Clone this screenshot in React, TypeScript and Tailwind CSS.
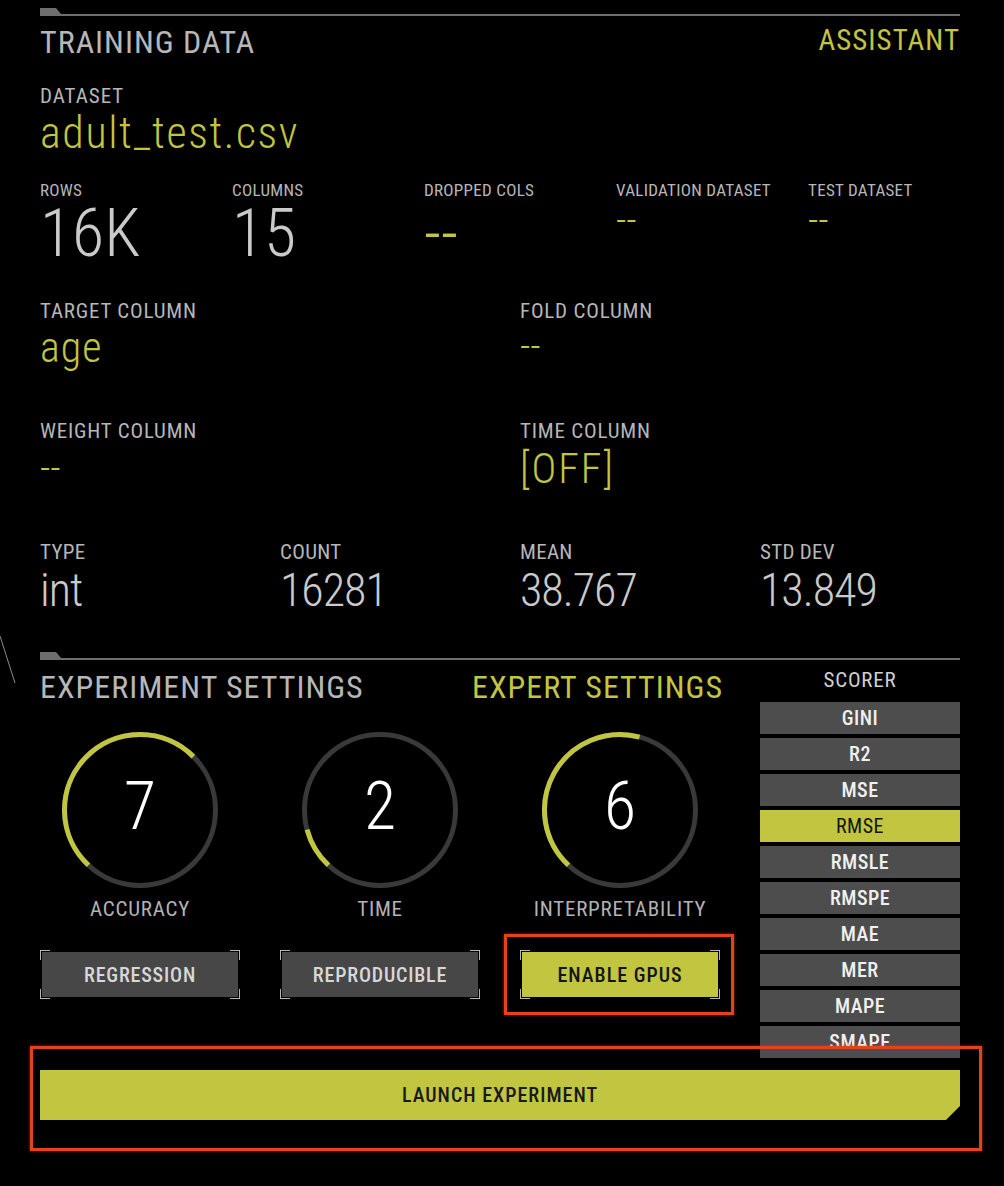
import React from "react";

const Y = "#c1c540";

function SectionLine() {
  return (
    <svg width="920" height="8" viewBox="0 0 920 8" className="block">
      <polygon points="0,0 16,0 21,6 920,6 920,8 0,8" fill="#6e6e6e" />
    </svg>
  );
}

function arcPath(cx: number, cy: number, r: number, a0: number, sweep: number) {
  const rad = (d: number) => (d * Math.PI) / 180;
  const x0 = cx + r * Math.sin(rad(a0));
  const y0 = cy - r * Math.cos(rad(a0));
  const a1 = a0 + sweep;
  const x1 = cx + r * Math.sin(rad(a1));
  const y1 = cy - r * Math.cos(rad(a1));
  const large = sweep > 180 ? 1 : 0;
  return `M ${x0} ${y0} A ${r} ${r} 0 ${large} 1 ${x1} ${y1}`;
}

function Dial({ value, label }: { value: number; label: string }) {
  const sweep = (value - 1) * 30 + 2;
  return (
    <div className="flex w-[200px] shrink-0 flex-col items-center">
      <div className="relative flex h-[160px] w-[160px] items-center justify-center">
        <svg width="160" height="160" viewBox="0 0 160 160" className="absolute inset-0">
          <circle cx="80" cy="80" r="75.5" fill="none" stroke="#393939" strokeWidth="5" />
          <path d={arcPath(80, 80, 75.5, 223, sweep)} fill="none" stroke={Y} strokeWidth="5" />
        </svg>
        <span className="relative pb-[6px] text-[66px] leading-none font-light text-white">{value}</span>
      </div>
      <div className="mt-[9px] text-[21px] leading-none tracking-[0.8px] text-[#b3b3b3]">{label}</div>
    </div>
  );
}

function BracketButton({ label, active }: { label: string; active?: boolean }) {
  return (
    <div className="relative h-[49px] w-[200px] shrink-0 p-[2px]">
      <span className="absolute left-0 top-0 h-[10px] w-[10px] border-l border-t border-[#b5b5b5]" />
      <span className="absolute right-0 top-0 h-[10px] w-[10px] border-r border-t border-[#b5b5b5]" />
      <span className="absolute left-0 bottom-0 h-[10px] w-[10px] border-l border-b border-[#b5b5b5]" />
      <span className="absolute right-0 bottom-0 h-[10px] w-[10px] border-r border-b border-[#b5b5b5]" />
      <div
        className={
          active
            ? "flex h-full w-full items-center justify-center bg-[#c1c540] text-[20px] tracking-[1px] font-medium text-[#151515]"
            : "flex h-full w-full items-center justify-center bg-[#474747] text-[20px] tracking-[0.8px] font-medium text-[#d8d8d8]"
        }
      >
        {label}
      </div>
    </div>
  );
}

const scorers = ["GINI", "R2", "MSE", "RMSE", "RMSLE", "RMSPE", "MAE", "MER", "MAPE", "SMAPE", "AUC", "LOGLOSS"];

export default function App() {
  return (
    <div className="relative h-[1186px] w-[1004px] overflow-hidden bg-black font-['Roboto_Condensed','Liberation_Sans_Narrow','Roboto',sans-serif]">
      <svg width="20" height="60" viewBox="0 0 20 60" className="absolute left-0 top-[630px]">
        <line x1="0" y1="6" x2="15" y2="53" stroke="#8a8a8a" strokeWidth="1" />
      </svg>

      <div className="w-[960px] pl-[40px] pt-[8px]">
        {/* TRAINING DATA */}
        <SectionLine />
        <div className="mt-[10px] flex items-start justify-between">
          <div className="text-[32px] leading-none tracking-[1px] text-[#b7b7b7]">TRAINING DATA</div>
          <div className="text-[29px] leading-none tracking-[1px] text-[#c1c540]">ASSISTANT</div>
        </div>

        <div className="mt-[28px] text-[21px] leading-none tracking-[1px] text-[#b7b7b7]">DATASET</div>
        <div className="mt-[4px] text-[44px] leading-none font-light tracking-[1.6px] text-[#c1c540]">adult_test.csv</div>

        <div className="mt-[27px] grid grid-cols-[192px_192px_192px_192px_152px]">
          {[
            { l: "ROWS", v: "16K", big: true, y: false },
            { l: "COLUMNS", v: "15", big: true, y: false },
            { l: "DROPPED COLS", v: "--", big: true, y: true },
            { l: "VALIDATION DATASET", v: "--", big: false, y: true },
            { l: "TEST DATASET", v: "--", big: false, y: true },
          ].map((c) => (
            <div key={c.l}>
              <div className="text-[17px] leading-none tracking-[0.3px] text-[#b7b7b7]">{c.l}</div>
              <div
                className={
                  (c.big ? "text-[66px] " : "text-[40px] ") +
                  (c.y ? "text-[#c1c540] " : "text-[#cacaca] ") +
                  "mt-[2px] leading-none font-light"
                }
              >
                {c.v}
              </div>
            </div>
          ))}
        </div>

        <div className="mt-[34px] grid grid-cols-[480px_440px]">
          <div>
            <div className="text-[21px] leading-none tracking-[0.8px] text-[#b7b7b7]">TARGET COLUMN</div>
            <div className="mt-[5px] text-[42px] leading-none font-light tracking-[1px] text-[#c1c540]">age</div>
          </div>
          <div>
            <div className="text-[21px] leading-none tracking-[0.8px] text-[#b7b7b7]">FOLD COLUMN</div>
            <div className="mt-[5px] text-[40px] leading-none font-light text-[#c1c540]">--</div>
          </div>
        </div>

        <div className="mt-[52px] grid grid-cols-[480px_440px]">
          <div>
            <div className="text-[21px] leading-none tracking-[0.8px] text-[#b7b7b7]">WEIGHT COLUMN</div>
            <div className="mt-[7px] text-[40px] leading-none font-light text-[#c1c540]">--</div>
          </div>
          <div>
            <div className="text-[21px] leading-none tracking-[0.8px] text-[#b7b7b7]">TIME COLUMN</div>
            <div className="mt-[6px] text-[42px] leading-none font-light tracking-[2px] text-[#c1c540]">[OFF]</div>
          </div>
        </div>

        <div className="mt-[52px] grid grid-cols-[240px_240px_240px_200px]">
          {[
            ["TYPE", "int"],
            ["COUNT", "16281"],
            ["MEAN", "38.767"],
            ["STD DEV", "13.849"],
          ].map(([l, v]) => (
            <div key={l}>
              <div className="text-[21px] leading-none tracking-[0.3px] text-[#b7b7b7]">{l}</div>
              <div className="mt-[4px] text-[46px] leading-none font-light tracking-[-1px] text-[#cacaca]">{v}</div>
            </div>
          ))}
        </div>

        {/* EXPERIMENT SETTINGS */}
        <div className="mt-[39px]">
          <SectionLine />
        </div>
        <div className="flex">
          <div className="w-[680px] shrink-0">
            <div className="mt-[11px] flex items-start">
              <div className="w-[432px] shrink-0 text-[32px] leading-none tracking-[1px] text-[#b7b7b7]">EXPERIMENT SETTINGS</div>
              <div className="shrink-0 text-[32px] leading-none tracking-[1px] text-[#c1c540]">EXPERT SETTINGS</div>
            </div>
            <div className="mt-[27px] flex gap-[40px]">
              <Dial value={7} label="ACCURACY" />
              <Dial value={2} label="TIME" />
              <Dial value={6} label="INTERPRETABILITY" />
            </div>
            <div className="mt-[30px] flex gap-[40px]">
              <BracketButton label="REGRESSION" />
              <BracketButton label="REPRODUCIBLE" />
              <BracketButton label="ENABLE GPUS" active />
            </div>
          </div>
          <div className="ml-[40px] w-[200px] shrink-0">
            <div className="mt-[10px] text-center text-[21px] leading-none tracking-[0.8px] text-[#d0d0d0]">SCORER</div>
            <div className="mt-[11px] flex h-[356px] flex-col gap-[4px] overflow-hidden">
              {scorers.map((s) => (
                <div
                  key={s}
                  className={
                    s === "RMSE"
                      ? "flex h-[32px] shrink-0 items-center justify-center bg-[#c1c540] text-[20px] tracking-[0.5px] text-[#151515]"
                      : "flex h-[32px] shrink-0 items-center justify-center bg-[#4d4d4d] text-[20px] font-medium tracking-[0.5px] text-[#f0f0f0]"
                  }
                >
                  {s}
                </div>
              ))}
            </div>
          </div>
        </div>

        <button className="mt-[12px] flex h-[50px] w-[920px] items-center justify-center bg-[#c1c540] text-[20px] font-medium tracking-[1px] text-[#1a1a1a] [clip-path:polygon(0_0,100%_0,100%_calc(100%_-_14px),calc(100%_-_14px)_100%,0_100%)]">
          LAUNCH EXPERIMENT
        </button>
      </div>

      {/* annotation boxes */}
      <div className="pointer-events-none absolute left-[504px] top-[934px] h-[81px] w-[230px] border-[3px] border-[#e4411f] shadow-[0_0_3px_rgba(228,65,31,0.7)]" />
      <div className="pointer-events-none absolute left-[30px] top-[1046px] h-[105px] w-[952px] border-[3px] border-[#e4411f] shadow-[0_0_3px_rgba(228,65,31,0.7)]" />
    </div>
  );
}
